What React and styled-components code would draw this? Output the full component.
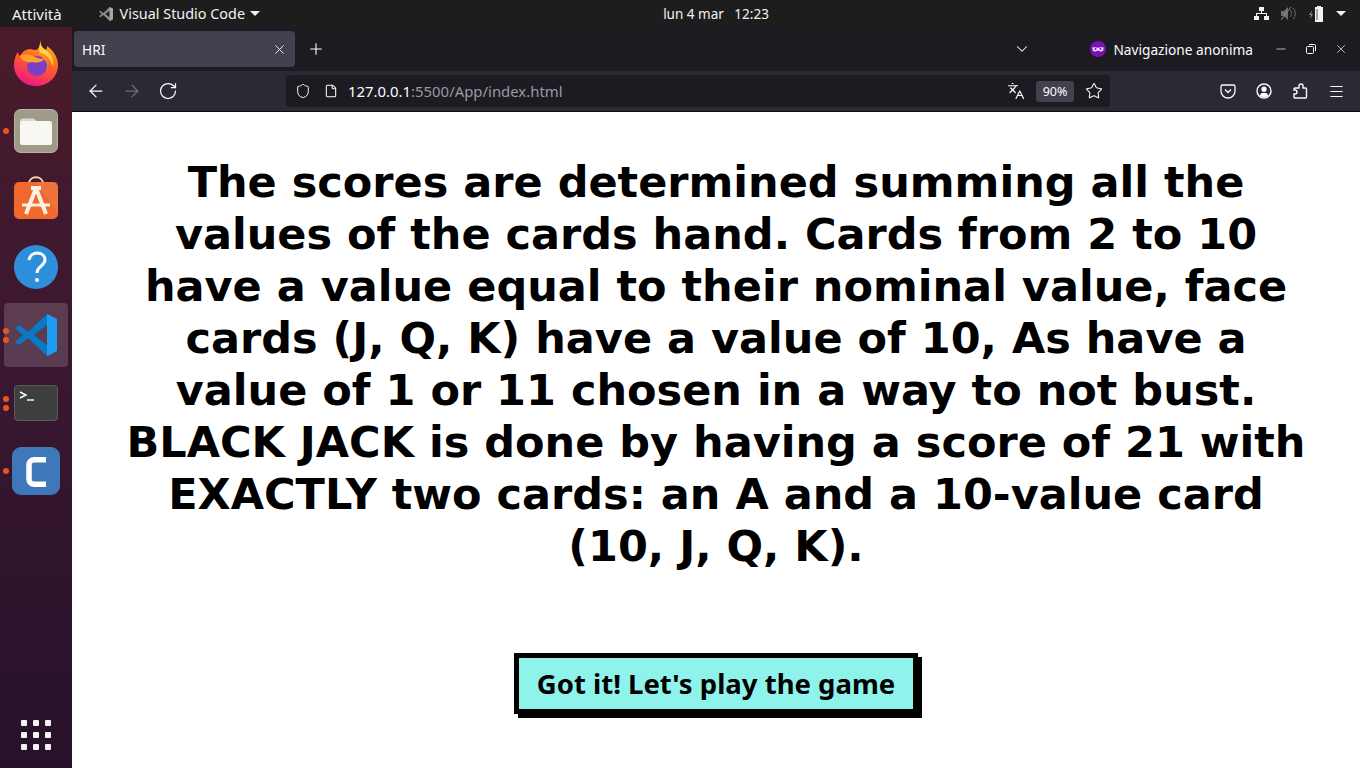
import React from 'react';
import styled, { createGlobalStyle } from 'styled-components';
import {
    ArrowLeft, ArrowRight, RotateCw, Shield, File, Star, Menu, Plus, X, Minus, ChevronDown,
    Languages,
} from 'lucide-react';

const Global = createGlobalStyle`
    html, body {
        margin: 0;
        padding: 0;
        background: #fff;
        overflow: hidden;
    }
`;

const Screen = styled.div`
    width: 1360px;
    height: 768px;
    display: flex;
    flex-direction: column;
    font-family: "Noto Sans", sans-serif;
    overflow: hidden;
`;

const TopBar = styled.div`
    height: 27px;
    flex: none;
    background: #1d1d1d;
    color: #f2f2f2;
    display: grid;
    grid-template-columns: 1fr 1fr;
    align-items: center;
    position: relative;
    font-size: 15px;
`;

const TopLeft = styled.div`
    display: flex;
    align-items: center;
    padding-left: 12px;
`;

const AppMenu = styled.div`
    display: flex;
    align-items: center;
    margin-left: 37px;
    gap: 7px;
    font-size: 14.4px;
`;

const Clock = styled.div`
    position: absolute;
    left: 0;
    right: 0;
    text-align: center;
    padding-left: 72px;
    font-size: 13.5px;
    white-space: pre;
    pointer-events: none;
`;

const TopRight = styled.div`
    display: flex;
    justify-content: flex-end;
    align-items: center;
    gap: 12px;
    padding-right: 14px;
`;

const Caret = styled.span`
    width: 0;
    height: 0;
    border-left: 5px solid transparent;
    border-right: 5px solid transparent;
    border-top: 5px solid #f2f2f2;
    margin-left: ${p => p.$gap || 0}px;
`;

const Body = styled.div`
    flex: 1;
    display: flex;
    min-height: 0;
`;

const Dock = styled.div`
    width: 72px;
    flex: none;
    display: flex;
    flex-direction: column;
    align-items: center;
    gap: 4px;
    padding-top: 4px;
    box-sizing: border-box;
    background: linear-gradient(180deg, #4a1b2a 0%, #3a1730 45%, #27122a 100%);
`;

const DockSlot = styled.div`
    position: relative;
    width: 64px;
    height: 64px;
    display: flex;
    align-items: center;
    justify-content: center;
    border-radius: 4px;
    background: ${p => (p.$active ? 'rgba(255,255,255,0.16)' : 'transparent')};
`;

const Dots = styled.div`
    position: absolute;
    left: -1px;
    top: 0;
    bottom: 0;
    display: flex;
    flex-direction: column;
    justify-content: center;
    gap: 3px;
`;

const Dot = styled.span`
    width: 6px;
    height: 6px;
    border-radius: 50%;
    background: #e95420;
`;

const GridButton = styled.div`
    margin-top: auto;
    margin-bottom: 18px;
    display: grid;
    grid-template-columns: repeat(3, 6px);
    gap: 6px;
`;

const GridDot = styled.span`
    width: 6px;
    height: 6px;
    border-radius: 1px;
    background: #f4f2f3;
`;

const Browser = styled.div`
    flex: 1;
    display: flex;
    flex-direction: column;
    min-width: 0;
`;

const TabStrip = styled.div`
    height: 44px;
    flex: none;
    background: #1c1b22;
    color: #fbfbfe;
    display: flex;
    align-items: center;
    padding-left: 2px;
`;

const Tab = styled.div`
    width: 221px;
    height: 36px;
    box-sizing: border-box;
    background: #42414d;
    border-radius: 4px;
    display: flex;
    align-items: center;
    justify-content: space-between;
    padding: 0 8px;
    font-size: 13.7px;
`;

const NewTab = styled.div`
    display: flex;
    margin-left: 12px;
`;

const StripRight = styled.div`
    margin-left: auto;
    display: flex;
    align-items: center;
`;

const AllTabs = styled.div`
    display: flex;
    margin-right: 59px;
`;

const Incognito = styled.div`
    display: flex;
    align-items: center;
    gap: 7px;
    font-size: 13.7px;
    margin-right: 21px;
`;

const WindowControls = styled.div`
    display: flex;
    align-items: center;
    gap: 16px;
    padding-right: 12px;
`;

const Toolbar = styled.div`
    height: 40px;
    flex: none;
    background: #2b2a33;
    border-bottom: 1px solid #0c0c0d;
    color: #fbfbfe;
    display: flex;
    align-items: center;
`;

const NavGroup = styled.div`
    width: 214px;
    flex: none;
    display: flex;
    align-items: center;
    gap: 16px;
    padding-left: 14px;
    box-sizing: border-box;
`;

const NavIcon = styled.span`
    display: flex;
    color: ${p => (p.$muted ? '#6f6e76' : '#fbfbfe')};
`;

const PageIcon = styled(NavIcon)`
    margin-left: 13px;
`;

const UrlBar = styled.div`
    width: 824px;
    height: 32px;
    flex: none;
    background: #1c1b22;
    border-radius: 4px;
    display: flex;
    align-items: center;
    padding: 0 7px 0 9px;
    box-sizing: border-box;
`;

const UrlText = styled.div`
    margin-left: 10px;
    font-size: 14.9px;
    color: #9a99a2;
`;

const Host = styled.span`
    color: #fbfbfe;
`;

const UrlActions = styled.div`
    margin-left: auto;
    display: flex;
    align-items: center;
`;

const Zoom = styled.div`
    width: 38px;
    height: 21px;
    border-radius: 3px;
    background: #42414d;
    display: flex;
    align-items: center;
    justify-content: center;
    font-size: 12.5px;
    margin: 0 11px;
`;

const ToolRight = styled.div`
    display: flex;
    align-items: center;
    gap: 20px;
    margin-left: 110px;
`;

const Page = styled.div`
    flex: 1;
    background: #fff;
    display: flex;
    flex-direction: column;
    align-items: center;
    padding-top: 44px;
`;

const Message = styled.h1`
    width: 1180px;
    margin: 0 0 81px;
    font-family: "DejaVu Sans", sans-serif;
    font-weight: 700;
    font-size: 43px;
    line-height: 52px;
    text-align: center;
    color: #000;
`;

const PlayButton = styled.button`
    width: 404px;
    height: 61px;
    box-sizing: border-box;
    border: 5px solid #000;
    background: #8ef3ea;
    box-shadow: 4px 4px 0 #000;
    color: #000;
    font-family: "Noto Sans", sans-serif;
    font-weight: 700;
    font-size: 27.5px;
    padding: 0;
`;

function FirefoxLogo() {
    return (
        <svg width="46" height="48" viewBox="0 0 46 48">
            <defs>
                <linearGradient id="fx" x1="0.7" y1="0" x2="0.3" y2="1">
                    <stop offset="0" stopColor="#ffb31a" />
                    <stop offset="0.5" stopColor="#ff5a2a" />
                    <stop offset="1" stopColor="#f0148c" />
                </linearGradient>
            </defs>
            <path d="M28 1c-1 5 1 8 5 10 1-1 1-3 1-4 6 4 11 11 11 19 0 12-10 21-22 21S1 38 1 26c0-5 2-11 4-13 0 2 1 3 2 4 2-4 6-7 10-7 2 0 3 1 5 1 4 0 5-5 6-10z" fill="url(#fx)" />
            <path d="M28 1c-1 5 1 8 5 10 6 4 8 11 7 17-2-8-7-13-13-14-2-4 0-9 1-13z" fill="#ffd43a" />
            <circle cx="24" cy="27" r="10" fill="#7a3fc4" />
            <path d="M7 17c4-2 9-2 13 0 5 2 7 4 12 2-3 5-9 5-13 4-3 1-5 0-7-1-2 0-4-2-5-5z" fill="#ffa02e" />
            <path d="M24 15c7 0 11 6 11 12 0 2 0 3-1 5 3-9-3-16-10-17z" fill="#ffbd2e" />
        </svg>
    );
}

function FilesIcon() {
    return (
        <svg width="44" height="44" viewBox="0 0 44 44">
            <rect x="0.5" y="0.5" width="43" height="43" rx="6" fill="#a09b89" stroke="#b8b4a5" />
            <path d="M6 12c0-1.500 1-2.500 2.500-2.500h11L24 13H6z" fill="#dbd8cf" />
            <rect x="6" y="12" width="32" height="24" rx="2.500" fill="#f8f7f4" />
        </svg>
    );
}

function StoreIcon() {
    return (
        <svg width="44" height="48" viewBox="0 0 44 48">
            <path d="M15 9c0-9 14-9 14 0" fill="none" stroke="#f3d6b8" strokeWidth="2" />
            <rect x="0" y="7" width="44" height="37" rx="5" fill="#f0682c" />
            <path d="M22 13l-10 26M22 13l10 26" fill="none" stroke="#fdf0e6" strokeWidth="4" />
            <path d="M17 13h10" stroke="#fdf0e6" strokeWidth="4" />
            <path d="M8 30h28" stroke="#fdf0e6" strokeWidth="3" />
            <path d="M22 7h22v32z" fill="#fff" opacity="0.08" />
        </svg>
    );
}

function HelpIcon() {
    return (
        <svg width="44" height="46" viewBox="0 0 44 46">
            <circle cx="22" cy="23" r="22" fill="#2d8fdc" />
            <path d="M15 16c1-5 5-7 8-7 5 0 8 3 8 7 0 6-8 6-8 13" fill="none" stroke="#fff" strokeWidth="3" />
            <circle cx="23" cy="36" r="2" fill="#fff" />
        </svg>
    );
}

function VsCodeLogo({ size = 42, mono }) {
    return (
        <svg width={size} height={size} viewBox="0 0 42 42">
            <path
                d="M0 14l4-3 9 7L32 0l10 5v32l-10 5-19-18-9 7-4-3 8-7zM32 11L19 21l13 10z"
                fillRule="evenodd"
                fill={mono ? '#8a8a8a' : '#0a78c4'}
            />
            <path d="M32 0l10 5v32l-10 5V31l0-20z" fill={mono ? '#a8a8a8' : '#1f9cf0'} />
        </svg>
    );
}

function TerminalIcon() {
    return (
        <svg width="44" height="36" viewBox="0 0 44 36">
            <rect x="0.5" y="0.5" width="43" height="35" rx="3" fill="#3f3f3f" stroke="#5a5a5a" />
            <path d="M6 7l6 3-6 3" fill="none" stroke="#fff" strokeWidth="1.400" />
            <path d="M13 15h7" stroke="#fff" strokeWidth="1.400" />
        </svg>
    );
}

function CodeBlocksIcon() {
    return (
        <svg width="48" height="48" viewBox="0 0 48 48">
            <rect width="48" height="48" rx="9" fill="#3f78ba" />
            <path d="M34 12.700H22a5 5 0 0 0-5 5v14.600a5 5 0 0 0 5 5h12" fill="none" stroke="#fff" strokeWidth="5.500" />
        </svg>
    );
}

function NetworkIcon() {
    return (
        <svg width="15" height="13" viewBox="0 0 15 13" fill="#f2f2f2">
            <rect x="5" y="0" width="5" height="4" />
            <rect x="0" y="9" width="5" height="4" />
            <rect x="10" y="9" width="5" height="4" />
            <path d="M7 4h1v2h5v3h-1V7H3v2H2V6h5z" />
        </svg>
    );
}

function VolumeIcon() {
    return (
        <svg width="15" height="13" viewBox="0 0 15 13">
            <path d="M0 4h3l4-4v13L3 9H0z" fill="#6e6e6e" />
            <path d="M9 3c2 2 2 5 0 7M12 1c3 3 3 8 0 11" fill="none" stroke="#6e6e6e" />
            <path d="M0 13L10 0" stroke="#8a8a8a" />
        </svg>
    );
}

function BatteryIcon() {
    return (
        <svg width="16" height="16" viewBox="0 0 16 16">
            <path d="M4 4L1 9h2l-1 4 3-5H3z" fill="#8f8f8f" />
            <rect x="9" y="0" width="4" height="2" fill="#f2f2f2" />
            <rect x="7.500" y="1.500" width="7" height="14" fill="#f2f2f2" stroke="#f2f2f2" />
            <rect x="8.500" y="3" width="1" height="11" fill="#555" />
        </svg>
    );
}

function MaskIcon() {
    return (
        <svg width="16" height="16" viewBox="0 0 16 16">
            <circle cx="8" cy="8" r="8" fill="#7a12b8" />
            <path d="M2.500 6.500c2-.7 3.800-.3 5.500.3 1.700-.6 3.500-1 5.500-.3.300 2.500-.7 4-2.700 4-1.300 0-2-1-2.800-1s-1.500 1-2.800 1c-2 0-3-1.500-2.700-4z" fill="#f0e0fa" />
            <circle cx="5.500" cy="8" r="1.100" fill="#7a12b8" />
            <circle cx="10.500" cy="8" r="1.100" fill="#7a12b8" />
        </svg>
    );
}

function RestoreIcon() {
    return (
        <svg width="14" height="14" viewBox="0 0 14 14" fill="none" stroke="#fbfbfe">
            <rect x="2.500" y="4.500" width="7" height="7" rx="1" />
            <path d="M5 2.500h5.500a1 1 0 0 1 1 1V9" />
        </svg>
    );
}

function PocketIcon() {
    return (
        <svg width="16" height="16" viewBox="0 0 16 16" fill="none" stroke="#fbfbfe" strokeWidth="1.300">
            <path d="M2.500 2h11A1.500 1.500 0 0 1 15 3.500V8a7 7 0 0 1-14 0V3.500A1.500 1.500 0 0 1 2.500 2z" />
            <path d="M5 6.500l3 3 3-3" />
        </svg>
    );
}

function AccountIcon() {
    return (
        <svg width="16" height="16" viewBox="0 0 16 16" fill="none">
            <circle cx="8" cy="8" r="7" stroke="#fbfbfe" strokeWidth="1.400" />
            <circle cx="8" cy="6.200" r="2.600" fill="#fbfbfe" />
            <path d="M3.500 12.500c1-2 2.500-2.700 4.500-2.700s3.500.7 4.500 2.700C11 14.500 5 14.500 3.500 12.500z" fill="#fbfbfe" />
        </svg>
    );
}

function ExtensionIcon() {
    return (
        <svg width="16" height="16" viewBox="0 0 16 16" fill="none" stroke="#fbfbfe" strokeWidth="1.400">
            <path d="M9 1a2 2 0 0 1 2 2v2h2.500a1 1 0 0 1 1 1v8a1 1 0 0 1-1 1H3a1 1 0 0 1-1-1v-3h1a2 2 0 0 0 0-4H2V6a1 1 0 0 1 1-1h4V3a2 2 0 0 1 2-2z" />
        </svg>
    );
}

const dockApps = [
    { key: 'firefox', icon: <FirefoxLogo />, dots: 0 },
    { key: 'files', icon: <FilesIcon />, dots: 1 },
    { key: 'store', icon: <StoreIcon />, dots: 0 },
    { key: 'help', icon: <HelpIcon />, dots: 0 },
    { key: 'vscode', icon: <VsCodeLogo />, dots: 2, active: true },
    { key: 'terminal', icon: <TerminalIcon />, dots: 2 },
    { key: 'codeblocks', icon: <CodeBlocksIcon />, dots: 1 },
];

function App() {
    return (
        <Screen>
            <Global />
            <TopBar>
                <TopLeft>
                    Attività
                    <AppMenu>
                        <VsCodeLogo size={14} mono />
                        Visual Studio Code
                        <Caret $gap={-2} />
                    </AppMenu>
                </TopLeft>
                <Clock>lun 4 mar   12:23</Clock>
                <TopRight>
                    <NetworkIcon />
                    <VolumeIcon />
                    <BatteryIcon />
                    <Caret />
                </TopRight>
            </TopBar>
            <Body>
                <Dock>
                    {dockApps.map(app => (
                        <DockSlot key={app.key} $active={app.active}>
                            {app.dots > 0 && (
                                <Dots>
                                    {Array.from({ length: app.dots }).map((_, i) => <Dot key={i} />)}
                                </Dots>
                            )}
                            {app.icon}
                        </DockSlot>
                    ))}
                    <GridButton>
                        {Array.from({ length: 9 }).map((_, i) => <GridDot key={i} />)}
                    </GridButton>
                </Dock>
                <Browser>
                    <TabStrip>
                        <Tab>
                            HRI
                            <X size={15} strokeWidth={1.4} />
                        </Tab>
                        <NewTab><Plus size={18} strokeWidth={1.5} /></NewTab>
                        <StripRight>
                            <AllTabs><ChevronDown size={18} strokeWidth={1.4} /></AllTabs>
                            <Incognito>
                                <MaskIcon />
                                Navigazione anonima
                            </Incognito>
                            <WindowControls>
                                <Minus size={14} strokeWidth={1.2} />
                                <RestoreIcon />
                                <X size={14} strokeWidth={1.2} />
                            </WindowControls>
                        </StripRight>
                    </TabStrip>
                    <Toolbar>
                        <NavGroup>
                            <NavIcon><ArrowLeft size={20} strokeWidth={1.5} /></NavIcon>
                            <NavIcon $muted><ArrowRight size={20} strokeWidth={1.5} /></NavIcon>
                            <NavIcon><RotateCw size={20} strokeWidth={1.5} /></NavIcon>
                        </NavGroup>
                        <UrlBar>
                            <NavIcon><Shield size={16} strokeWidth={1.5} /></NavIcon>
                            <PageIcon><File size={14} strokeWidth={1.8} /></PageIcon>
                            <UrlText><Host>127.0.0.1</Host>:5500/App/index.html</UrlText>
                            <UrlActions>
                                <NavIcon><Languages size={18} strokeWidth={1.6} /></NavIcon>
                                <Zoom>90%</Zoom>
                                <NavIcon><Star size={18} strokeWidth={1.4} /></NavIcon>
                            </UrlActions>
                        </UrlBar>
                        <ToolRight>
                            <NavIcon><PocketIcon /></NavIcon>
                            <NavIcon><AccountIcon /></NavIcon>
                            <NavIcon><ExtensionIcon /></NavIcon>
                            <NavIcon><Menu size={17} strokeWidth={1.5} /></NavIcon>
                        </ToolRight>
                    </Toolbar>
                    <Page>
                        <Message>
                            The scores are determined summing all the values of the cards hand. Cards from 2 to 10 have a value equal to their nominal value, face cards (J, Q, K) have a value of 10, As have a value of 1 or 11 chosen in a way to not bust. BLACK JACK is done by having a score of 21 with EXACTLY two cards: an A and a 10-value card (10, J, Q, K).
                        </Message>
                        <PlayButton>Got it! Let's play the game</PlayButton>
                    </Page>
                </Browser>
            </Body>
        </Screen>
    );
}

export default App;
